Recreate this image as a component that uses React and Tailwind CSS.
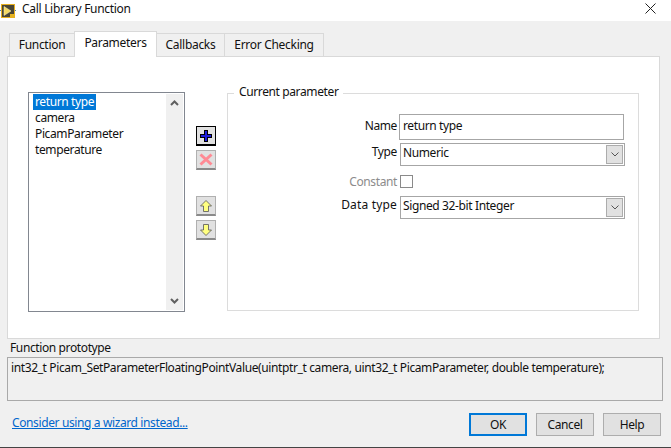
import React from 'react';

const params = ['return type', 'camera', 'PicamParameter', 'temperature'];

const Chevron = ({ up }) => (
  <svg width="9" height="6" viewBox="0 0 9 6" fill="none" stroke="#606060" strokeWidth="2">
    <path d={up ? 'M1 5 L4.5 1.5 L8 5' : 'M1 1 L4.5 4.5 L8 1'} />
  </svg>
);

const LabviewIcon = () => (
  <svg width="16" height="16" viewBox="0 0 16 16">
    <path d="M0 7.5 H16" stroke="#4a80c0" strokeWidth="1" />
    <rect x="1.5" y="1.5" width="13" height="13" fill="#4a4636" stroke="#e8b020" />
    <path d="M4 3.5 L11 8 L4 12.5 Z" fill="#f4d860" stroke="#fff4b8" strokeWidth="0.5" />
    <rect x="10" y="11" width="4" height="3" fill="#e6b422" />
  </svg>
);

const Select = ({ value }) => (
  <div className="w-[225px] h-[23px] border border-[#a6a6a6] bg-white flex items-center justify-between pl-[2px] pr-px">
    <span className="leading-none -mt-[3px]">{value}</span>
    <div className="w-[17px] h-[19px] bg-[#e1e1e1] border border-[#acacac] flex items-center justify-center">
      <svg width="8" height="5" viewBox="0 0 8 5" fill="none" stroke="#555" strokeWidth="1">
        <path d="M0.5 0.5 L4 4 L7.5 0.5" />
      </svg>
    </div>
  </div>
);

const ToolButton = ({ className = '', children }) => (
  <button className={`w-[20px] h-[20px] bg-[#e1e1e1] flex items-center justify-center border border-b-2 ${className}`}>
    {children}
  </button>
);

const FooterButton = ({ label, focused }) => (
  <button className={`w-[58px] h-[23px] bg-[#e1e1e1] flex items-center justify-center border ${focused ? 'border-2 border-[#0078d7]' : 'border-[#adadad]'}`}>
    {label}
  </button>
);

export default function App() {
  return (
    <div className="w-[671px] h-[448px] bg-[#f0f0f0] flex flex-col text-[12px] text-[#111] overflow-hidden font-['Noto_Sans',sans-serif] tracking-[-0.38px]">
      {/* title bar */}
      <div className="h-[21px] bg-white flex items-center pr-[15px]">
        <LabviewIcon />
        <span className="ml-[6px] -mt-[4px] tracking-[-0.3px]">Call Library Function</span>
        <svg className="ml-auto -mt-[5px]" width="11" height="11" viewBox="0 0 11 11" stroke="#222" strokeWidth="1">
          <path d="M0.5 0.5 L10.5 10.5 M10.5 0.5 L0.5 10.5" />
        </svg>
      </div>

      {/* tabs */}
      <div className="flex items-end h-[25px] mt-[10px] pl-[9px] relative z-10 tracking-[-0.3px]">
        <div className="w-[65px] h-[23px] bg-[#f0f0f0] border border-b-0 border-r-0 border-[#d9d9d9] flex items-center justify-center">Function</div>
        <div className="w-[83px] h-[26px] -mb-px bg-white border border-b-0 border-[#d9d9d9] flex items-start pt-[2px] justify-center">Parameters</div>
        <div className="w-[68px] h-[23px] bg-[#f0f0f0] border border-b-0 border-l-0 border-[#d9d9d9] flex items-center justify-center">Callbacks</div>
        <div className="w-[99px] h-[23px] bg-[#f0f0f0] border border-b-0 border-l-0 border-[#d9d9d9] flex items-center justify-center">Error Checking</div>
      </div>

      {/* tab panel */}
      <div className="ml-[7px] w-[653px] h-[283px] bg-white border border-[#d9d9d9] flex items-start pt-[35px] pl-[20px]">
        <div className="w-[157px] h-[220px] border border-[#828790] flex p-[1px]">
          <ul className="flex-1 pl-[3px] leading-[16px]">
            {params.map((p, i) => (
              <li key={p}>
                <span className={i === 0 ? 'bg-[#0078d7] text-white px-[2px] inline-block' : 'px-[2px] inline-block'}>{p}</span>
              </li>
            ))}
          </ul>
          <div className="w-[17px] bg-[#f0f0f0] flex flex-col items-center justify-between py-[6px]">
            <Chevron up />
            <Chevron />
          </div>
        </div>

        {/* add / remove / move buttons */}
        <div className="ml-[11px] mt-[34px] flex flex-col">
          <ToolButton className="border-black">
            <svg width="14" height="14" viewBox="0 0 14 14">
              <path d="M5 1h4v4h4v4H9v4H5V9H1V5h4z" fill="#000" />
              <path d="M6 2h2v4h4v2H8v4H6V8H2V6h4z" fill="#1c1cd8" />
            </svg>
          </ToolButton>
          <ToolButton className="mt-[4px] border-[#b0b0b0] border-b-[#8a8a8a]">
            <svg width="14" height="13" viewBox="0 0 14 13" stroke="#ff8a94" strokeWidth="3">
              <path d="M1.5 1.5 L12.5 11.5 M12.5 1.5 L1.5 11.5" />
            </svg>
          </ToolButton>
          <ToolButton className="mt-[26px] border-[#b0b0b0] border-b-[#8a8a8a]">
            <svg width="12" height="12" viewBox="0 0 12 12">
              <path d="M6 0.5 L11.5 6 H8.5 V11.5 H3.5 V6 H0.5 Z" fill="#ffff80" stroke="#555" strokeWidth="0.8" />
            </svg>
          </ToolButton>
          <ToolButton className="mt-[4px] border-[#b0b0b0] border-b-[#8a8a8a]">
            <svg width="12" height="12" viewBox="0 0 12 12">
              <path d="M6 11.5 L11.5 6 H8.5 V0.5 H3.5 V6 H0.5 Z" fill="#ffff80" stroke="#555" strokeWidth="0.8" />
            </svg>
          </ToolButton>
        </div>

        {/* current parameter group */}
        <div className="ml-[11px] mt-px w-[412px] h-[218px] border border-[#dcdcdc] relative flex flex-col items-end pt-[20px] pr-[13px]">
          <span className="absolute left-[6px] -top-[10px] bg-white px-[5px] leading-[16px]">Current parameter</span>
          <div className="flex items-center mr-px">
            <span className="mr-[2px] -mt-[3px]">Name</span>
            <div className="w-[225px] h-[26px] border border-[#a6a6a6] flex items-center pl-[3px] pb-[3px]">return type</div>
          </div>
          <div className="flex items-center mt-[3px]">
            <span className="mr-[3px] -mt-[5px]">Type</span>
            <Select value="Numeric" />
          </div>
          <div className="flex items-center h-[13px] mt-[9px] mr-[212px]">
            <span className="mr-[3px] text-[#8c8c8c]">Constant</span>
            <div className="w-[13px] h-[13px] border border-[#8a8a8a] bg-white" />
          </div>
          <div className="flex items-center mt-[8px]">
            <span className="mr-[3px] -mt-[5px] tracking-[0.17px]">Data type</span>
            <Select value="Signed 32-bit Integer" />
          </div>
        </div>
      </div>

      {/* prototype */}
      <div className="ml-[10px] leading-[18px]">Function prototype</div>
      <div className="ml-[7px] w-[656px] h-[44px] border border-[#a9a9a9] pl-[3px] pt-[1px] leading-[18px]">
        int32_t Picam_SetParameterFloatingPointValue(uintptr_t camera, uint32_t PicamParameter, double temperature);
      </div>

      {/* footer */}
      <div className="flex items-center mt-[12px] pl-[12px]">
        <a className="text-[#0066cc] underline -mt-[4px]">Consider using a wizard instead...</a>
        <div className="ml-auto flex gap-[9px] pr-[10px]">
          <FooterButton label="OK" focused />
          <FooterButton label="Cancel" />
          <FooterButton label="Help" />
        </div>
      </div>
      <div className="mt-auto h-px bg-[#444]" />
    </div>
  );
}
